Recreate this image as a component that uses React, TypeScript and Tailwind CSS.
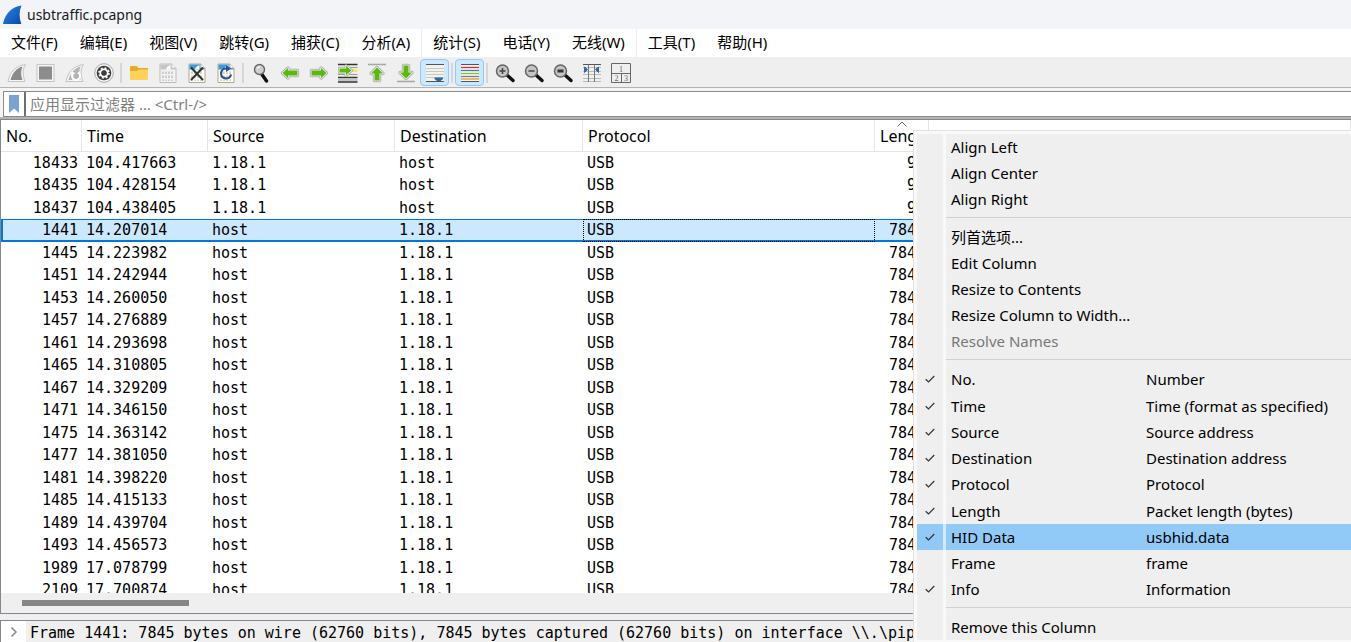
import React, { useState } from 'react';
import clsx from 'clsx';

type Packet = {
    no: number;
    time: string;
    source: string;
    destination: string;
    protocol: string;
    length: number;
};

const fromDevice = (no: number, time: string): Packet => ({
    no, time, source: '1.18.1', destination: 'host', protocol: 'USB', length: 91,
});

const fromHost = (no: number, time: string): Packet => ({
    no, time, source: 'host', destination: '1.18.1', protocol: 'USB', length: 7845,
});

const packets: Packet[] = [
    fromDevice(18433, '104.417663'),
    fromDevice(18435, '104.428154'),
    fromDevice(18437, '104.438405'),
    fromHost(1441, '14.207014'),
    fromHost(1445, '14.223982'),
    fromHost(1451, '14.242944'),
    fromHost(1453, '14.260050'),
    fromHost(1457, '14.276889'),
    fromHost(1461, '14.293698'),
    fromHost(1465, '14.310805'),
    fromHost(1467, '14.329209'),
    fromHost(1471, '14.346150'),
    fromHost(1475, '14.363142'),
    fromHost(1477, '14.381050'),
    fromHost(1481, '14.398220'),
    fromHost(1485, '14.415133'),
    fromHost(1489, '14.439704'),
    fromHost(1493, '14.456573'),
    fromHost(1989, '17.078799'),
    fromHost(2109, '17.700874'),
];

const menuGroups = [
    ['文件(F)', '编辑(E)', '视图(V)', '跳转(G)', '捕获(C)', '分析(A)'],
    ['统计(S)', '电话(Y)', '无线(W)'],
    ['工具(T)', '帮助(H)'],
];

const columns = [
    { name: 'No.', field: 'Number', shown: true },
    { name: 'Time', field: 'Time (format as specified)', shown: true },
    { name: 'Source', field: 'Source address', shown: true },
    { name: 'Destination', field: 'Destination address', shown: true },
    { name: 'Protocol', field: 'Protocol', shown: true },
    { name: 'Length', field: 'Packet length (bytes)', shown: true },
    { name: 'HID Data', field: 'usbhid.data', shown: true },
    { name: 'Frame', field: 'frame', shown: false },
    { name: 'Info', field: 'Information', shown: true },
];

function Icon({ children }: { children: React.ReactNode }) {
    return <svg viewBox="0 0 20 20" className="h-5 w-5 shrink-0" aria-hidden="true">{children}</svg>;
}

function Fin() {
    return (
        <>
            <path d="M1 18.500C3 9 8 3 18.500 1.500C15.500 6 15.500 12 18 18.500Z" fill="#f6f6f6" stroke="#c4c4c4" />
            <path d="M3.500 17C5.500 10 9 5.500 15.500 3.500C13.500 8 13.800 12.500 15.500 17Z" fill="#8a8a8a" />
        </>
    );
}

function DocPage({ muted }: { muted?: boolean }) {
    return (
        <>
            <path d="M2 1H14L18 5V19.500H2Z" fill={muted ? '#f4f4f4' : '#fffff0'} stroke={muted ? '#bdbdbd' : '#a9a99c'} />
            <path d="M2.500 1.500H13.500V5H17.500V6.500H2.500Z" fill={muted ? '#c6c6c6' : '#3a9bd8'} />
            <path d="M8 6.500C8.500 4 10 2.800 12.500 2.200V6.500Z" fill="#fff" />
            <path d="M14 1V5H18" fill="#fff" stroke={muted ? '#bdbdbd' : '#a9a99c'} strokeWidth=".7" />
            <path d="M5 8.500V11M5 12.500V15M5 16.500V18M8 8.500V11M8 12.500V15M8 16.500V18M11 8.500V11M11 12.500V15M11 16.500V18M14 8.500V11M14 12.500V15M14 16.500V18" stroke={muted ? '#bcbcbc' : '#c2c2b4'} strokeWidth="1.4" />
        </>
    );
}

function Arrow({ d }: { d: string }) {
    return (
        <>
            <path d={d} fill="#b3b3b3" stroke="#b3b3b3" strokeWidth="3.400" strokeLinejoin="round" />
            <path d={d} fill="#5cb811" stroke="#eef3e8" strokeWidth="1.400" strokeLinejoin="round" />
            <path d={d} fill="#5cb811" />
        </>
    );
}

function Magnifier({ children }: { children?: React.ReactNode }) {
    return (
        <>
            <path d="M12.500 12.500L18 17.500" stroke="#111" strokeWidth="3.400" strokeLinecap="round" />
            <circle cx="7.500" cy="8" r="6" fill="#c4c4c4" stroke="#666" strokeWidth="1.500" />
            {children}
        </>
    );
}

const toolbar: { label: string; icon: React.ReactNode; on?: boolean }[][] = [
    [
        { label: '开始捕获', icon: <Fin /> },
        {
            label: '停止捕获',
            icon: (
                <>
                    <rect x="1" y="1.500" width="17" height="17" fill="#f6f6f6" stroke="#c4c4c4" />
                    <rect x="3" y="3.500" width="13" height="13" fill="#8c8c8c" />
                </>
            ),
        },
        {
            label: '重新开始捕获',
            icon: (
                <>
                    <path d="M1 18.500C3 9 8 3 18.500 1.500C15.500 6 15.500 12 18 18.500Z" fill="#f2f2f2" stroke="#c4c4c4" />
                    <path d="M3.500 17C5.500 10 9 5.500 15.500 3.500C13.500 8 13.800 12.500 15.500 17Z" fill="#b4b4b4" />
                    <path d="M13 9.500A4 4 0 1 1 7.500 11.500" fill="none" stroke="#fff" strokeWidth="2.200" />
                    <path d="M6 12.500L6.500 8L10.500 10.500Z" fill="#fff" />
                </>
            ),
        },
        {
            label: '捕获选项',
            icon: (
                <>
                    <circle cx="10" cy="10" r="9.300" fill="#f4f4f4" stroke="#a8a8a8" />
                    <circle cx="10" cy="10" r="7.300" fill="#3d3d3d" />
                    <circle cx="10" cy="10" r="3.600" fill="none" stroke="#fff" strokeWidth="1.800" />
                    <circle cx="10" cy="10" r="5" fill="none" stroke="#fff" strokeWidth="1.600" strokeDasharray="1.960 1.960" />
                    <circle cx="10" cy="10" r="2.500" fill="#3d3d3d" />
                </>
            ),
        },
    ],
    [
        {
            label: '打开',
            icon: (
                <>
                    <path d="M1 4Q1 3 2 3H7.500L9.500 5H18Q19 5 19 6V10H1Z" fill="#e9a825" />
                    <path d="M1 8H8L10 6.500H18Q19 6.500 19 7.500V16Q19 17 18 17H2Q1 17 1 16Z" fill="#ffd25c" />
                </>
            ),
        },
        { label: '保存', icon: <DocPage muted /> },
        {
            label: '关闭',
            icon: (
                <>
                    <DocPage />
                    <path d="M4.500 5L15.500 16.500M15.500 5L4.500 16.500" stroke="#2e3436" strokeWidth="2" strokeLinecap="round" />
                </>
            ),
        },
        {
            label: '重新加载',
            icon: (
                <>
                    <DocPage />
                    <path d="M10.500 5.500A5 5 0 1 0 15 11.500" fill="none" stroke="#2a4f8f" strokeWidth="2.200" />
                    <path d="M10 2L15 5.500L10 9Z" fill="#2a4f8f" />
                </>
            ),
        },
    ],
    [
        {
            label: '查找分组',
            icon: (
                <>
                    <path d="M11 11.500L15.500 18" stroke="#111" strokeWidth="3.400" strokeLinecap="round" />
                    <circle cx="8.500" cy="6.500" r="5" fill="#cfcfcf" stroke="#666" strokeWidth="1.400" />
                    <path d="M6 5.500Q7 3.800 9 3.800" fill="none" stroke="#fff" strokeWidth="1.200" />
                </>
            ),
        },
        { label: '上一分组', icon: <Arrow d="M2.500 10L8 5V7.500H17.500V12.500H8V15Z" /> },
        { label: '下一分组', icon: <Arrow d="M17.500 10L12 5V7.500H2.500V12.500H12V15Z" /> },
        {
            label: '转到分组',
            icon: (
                <>
                    <path d="M0 1.500H19.500M0 14.500H19.500M0 19H19.500" stroke="#333" strokeWidth="1.300" />
                    <path d="M0 4.500H19.500M0 11.500H19.500M0 17H19.500" stroke="#999" />
                    <path d="M13 7.500H19.500" stroke="#fce94f" strokeWidth="3" />
                    <Arrow d="M13.500 7.500L8 3V5.500H1.500V9.500H8V12Z" />
                </>
            ),
        },
        {
            label: '第一个分组',
            icon: (
                <>
                    <path d="M1 1.500H19" stroke="#a8a8a8" strokeWidth="1.600" />
                    <Arrow d="M10 4.500L4 10.500H7.500V17.500H12.500V10.500H16Z" />
                </>
            ),
        },
        {
            label: '最后一个分组',
            icon: (
                <>
                    <path d="M1 18.500H19" stroke="#a8a8a8" strokeWidth="1.600" />
                    <Arrow d="M10 15.500L4 9.500H7.500V2.500H12.500V9.500H16Z" />
                </>
            ),
        },
        {
            label: '自动滚动',
            on: true,
            icon: (
                <>
                    <rect x="1" y="1" width="18" height="18" fill="#f1f3ee" />
                    <path d="M1 1.500H19M1 18.500H19" stroke="#555" />
                    <path d="M1 5.500H19M1 8.500H19M1 11.500H19M1 14.500H19" stroke="#c5c8bf" />
                    <path d="M9.500 14.500H18V16L15.500 18H12L9.500 16Z" fill="#3465a4" />
                </>
            ),
        },
    ],
    [
        {
            label: '着色',
            on: true,
            icon: (
                <>
                    <rect x="1" y="1" width="18" height="18" fill="#f5f7fa" />
                    <path d="M1 1.500H19M1 18.500H19" stroke="#555" />
                    <path d="M1 4.500H19" stroke="#ef2929" strokeWidth="1.300" />
                    <path d="M1 7.500H19" stroke="#4a76b4" strokeWidth="1.300" />
                    <path d="M1 10.500H19" stroke="#73d216" strokeWidth="1.300" />
                    <path d="M1 13.500H19" stroke="#8d6f98" strokeWidth="1.300" />
                    <path d="M1 16H19" stroke="#c9a818" strokeWidth="1.300" />
                </>
            ),
        },
    ],
    [
        { label: '放大', icon: <Magnifier><path d="M4.500 8H10.500M7.500 5V11" stroke="#444" strokeWidth="1.500" /></Magnifier> },
        { label: '缩小', icon: <Magnifier><path d="M4.500 8H10.500" stroke="#444" strokeWidth="1.500" /></Magnifier> },
        { label: '正常大小', icon: <Magnifier><path d="M4.500 8H10.500" stroke="#333" strokeWidth="3" /></Magnifier> },
        {
            label: '调整列宽',
            icon: (
                <>
                    <path d="M1 1.500H19" stroke="#555" />
                    <path d="M1 4.500H19M1 8.500H19M1 11.500H19M1 15.500H19M1 18.500H19" stroke="#b9bdb3" />
                    <path d="M6.500 1.500V19M12.500 1.500V19" stroke="#777" />
                    <path d="M2.500 4L5.500 6.500L2.500 9.500ZM16.500 4L13.500 6.500L16.500 9.500Z" fill="#3465a4" stroke="#3465a4" />
                </>
            ),
        },
        {
            label: '布局',
            icon: (
                <>
                    <path d="M.5 .5H19.500V19.500H.5ZM.5 10.500H19.500M10.500 10.500V19.500" fill="none" stroke="#666" />
                    <g fill="#666" fontSize="8" fontFamily="Liberation Serif, serif" textAnchor="middle">
                        <text x="10" y="8.500">1</text>
                        <text x="5.500" y="18">2</text>
                        <text x="15" y="18">3</text>
                    </g>
                </>
            ),
        },
    ],
];

function TitleBar() {
    return (
        <header className="flex h-[29px] shrink-0 items-center gap-1 bg-[#f2f4f7] px-[3px]">
            <svg viewBox="0 0 20 20" className="h-5 w-5" aria-hidden="true">
                <defs>
                    <linearGradient id="fin" x1="0" y1="0" x2="1" y2="1">
                        <stop offset="0" stopColor="#2f86e8" />
                        <stop offset="1" stopColor="#0848a8" />
                    </linearGradient>
                </defs>
                <path d="M0 19C2 8.500 8.500 2 18.500 .5C16 6.500 16 12.500 18.300 19Z" fill="url(#fin)" />
            </svg>
            <h1 className="text-sm text-[#1a1a1a]">usbtraffic.pcapng</h1>
        </header>
    );
}

function MenuBar() {
    return (
        <nav className="flex h-7 shrink-0 items-center bg-white">
            {menuGroups.map((group, i) => (
                <div key={i} className="flex h-full items-center border-l border-[#ececec] pb-[2px] first:border-l-0">
                    {group.map((label) => (
                        <button key={label} type="button" className="px-[11px] text-[15px] leading-6 whitespace-nowrap">{label}</button>
                    ))}
                </div>
            ))}
        </nav>
    );
}

function Toolbar() {
    return (
        <div className="flex h-[31px] shrink-0 items-center border-b border-[#b4b4b4] bg-[#efefef] pt-px pl-[2px]">
            {toolbar.map((group, i) => (
                <React.Fragment key={i}>
                    {i > 0 && <span className="mx-[2px] h-5 w-[2px] shrink-0 bg-[#d6d6d6]" />}
                    {group.map((item) => (
                        <button
                            key={item.label}
                            type="button"
                            aria-label={item.label}
                            className={clsx(
                                'flex h-[27px] w-[29px] shrink-0 items-center justify-center rounded-sm border',
                                item.on ? 'border-[#90c8f6] bg-[#cce8ff]' : 'border-transparent',
                            )}
                        >
                            <Icon>{item.icon}</Icon>
                        </button>
                    ))}
                </React.Fragment>
            ))}
        </div>
    );
}

function FilterBar() {
    const [filter, setFilter] = useState('');

    return (
        <div className="shrink-0 border-b-2 border-[#b4b4b4] bg-[#f5f5f5] pt-[3px] pl-[3px]">
            <div className="flex h-[26px] border border-r-0 border-[#8a8a8a] bg-white">
                <button type="button" aria-label="书签" className="flex w-[22px] items-center justify-center border-r-2 border-[#6e6e6e]">
                    <svg viewBox="0 0 12 18" className="h-[18px] w-3" aria-hidden="true">
                        <path d="M1 0H11V18L6 13.500L1 18Z" fill="#7ba2d0" />
                    </svg>
                </button>
                <input
                    type="text"
                    aria-label="显示过滤器"
                    value={filter}
                    onChange={(e) => setFilter(e.target.value)}
                    placeholder="应用显示过滤器 … <Ctrl-/>"
                    className="min-w-0 flex-1 px-1 text-[15px] outline-none placeholder:text-[#808080]"
                />
            </div>
        </div>
    );
}

function PacketList() {
    const [selected, setSelected] = useState(1441);
    const th = 'relative h-8 border-r border-b border-[#e5e5e5] pl-[5px] text-left font-normal';

    return (
        <section className="flex min-h-0 flex-1 flex-col border border-r-0 border-[#828790] bg-white">
            <div className="min-h-0 flex-1 overflow-hidden">
                <table className="w-full table-fixed border-separate border-spacing-0">
                    <colgroup>
                        <col className="w-[81px]" />
                        <col className="w-[126px]" />
                        <col className="w-[187px]" />
                        <col className="w-[188px]" />
                        <col className="w-[292px]" />
                        <col className="w-[54px]" />
                        <col />
                    </colgroup>
                    <thead className="text-base">
                        <tr>
                            <th className={th}>No.</th>
                            <th className={th}>Time</th>
                            <th className={th}>Source</th>
                            <th className={th}>Destination</th>
                            <th className={th}>Protocol</th>
                            <th className={th}>
                                <svg viewBox="0 0 10 6" className="absolute top-px left-[22px] h-[6px] w-[10px]" aria-hidden="true">
                                    <path d="M.5 5.500L5 1L9.500 5.500" fill="none" stroke="#666" />
                                </svg>
                                Length
                            </th>
                            <th className={th} />
                        </tr>
                    </thead>
                    <tbody className="font-['DejaVu_Sans_Mono',monospace] text-[15px] leading-5">
                        {packets.map((p) => {
                            const active = p.no === selected;
                            const td = clsx(
                                'px-1 pb-0 align-top',
                                active ? 'border-t border-b-2 border-[#0078d7] bg-[#cce8ff] pt-0' : 'pt-px',
                            );
                            return (
                                <tr key={p.no} onClick={() => setSelected(p.no)} className="odd:h-[22px] even:h-[23px]">
                                    <td className={clsx(td, 'text-right', active && 'border-l-2')}>{p.no}</td>
                                    <td className={td}>{p.time}</td>
                                    <td className={td}>{p.source}</td>
                                    <td className={td}>{p.destination}</td>
                                    <td className={clsx(td, active && 'outline-1 -outline-offset-1 outline-dotted outline-black')}>{p.protocol}</td>
                                    <td className={clsx(td, 'text-right')}>{p.length}</td>
                                    <td className={td} />
                                </tr>
                            );
                        })}
                    </tbody>
                </table>
            </div>
            <div className="flex h-5 shrink-0 items-center bg-[#efefef] pl-[21px]">
                <div className="h-[6px] w-[167px] bg-[#868686]" />
            </div>
        </section>
    );
}

function PacketDetails() {
    return (
        <section className="mt-[6px] flex h-[22px] shrink-0 overflow-hidden border-t border-l border-[#828790] bg-[#efefef]">
            <button type="button" aria-label="展开" className="flex w-[25px] shrink-0 items-center justify-center bg-white">
                <svg viewBox="0 0 8 12" className="h-3 w-2" aria-hidden="true">
                    <path d="M1.500 1.500L6 6L1.500 10.500" fill="none" stroke="#8a8a8a" strokeWidth="1.500" />
                </svg>
            </button>
            <p className="pl-1 font-['DejaVu_Sans_Mono',monospace] text-[15px] leading-6 whitespace-pre">
                Frame 1441: 7845 bytes on wire (62760 bits), 7845 bytes captured (62760 bits) on interface \\.\pipe
            </p>
        </section>
    );
}

function MenuItem({ label, disabled }: { label: string; disabled?: boolean }) {
    return (
        <li className="flex h-[26px]">
            <button type="button" disabled={disabled} className="flex-1 pl-[34px] text-left disabled:text-[#787878]">{label}</button>
        </li>
    );
}

function Separator() {
    return <li role="separator" className="mt-[5px] mb-[6px] ml-[29px] h-px bg-[#d0d0d0]" />;
}

function ColumnItem({ name, field, shown }: { name: string; field: string; shown: boolean }) {
    const [checked, setChecked] = useState(shown);

    return (
        <li className={clsx('flex h-[26px] nth-[4n+1]:h-[27px]', name === 'HID Data' && 'bg-[#91c9f7]')}>
            <label className="relative flex flex-1 items-center">
                <input type="checkbox" checked={checked} onChange={() => setChecked(!checked)} className="peer sr-only" />
                <svg viewBox="0 0 10 8" className="invisible mr-[16px] ml-2 h-2 w-[10px] shrink-0 peer-checked:visible" aria-hidden="true">
                    <path d="M.7 4.300L3.500 7L9.300 1" fill="none" stroke="#333" strokeWidth="1.200" />
                </svg>
                <span className="w-[195px] shrink-0">{name}</span>
                <span className="whitespace-nowrap">{field}</span>
            </label>
        </li>
    );
}

function ColumnMenu() {
    return (
        <div className="absolute top-[130px] right-0 left-[913px] overflow-hidden border-t border-l border-[#e2e2e2] bg-[#f9f9f9] pt-[3px] pb-[3px] pl-[3px]">
            <ul className="relative bg-[#efefef] text-[15px] leading-5">
                <li role="presentation" className="absolute inset-y-0 left-[26px] w-[3px] bg-white/60" />
                <MenuItem label="Align Left" />
                <MenuItem label="Align Center" />
                <MenuItem label="Align Right" />
                <Separator />
                <MenuItem label="列首选项..." />
                <MenuItem label="Edit Column" />
                <MenuItem label="Resize to Contents" />
                <MenuItem label="Resize Column to Width..." />
                <MenuItem label="Resolve Names" disabled />
                <Separator />
                {columns.map((c) => <ColumnItem key={c.name} {...c} />)}
                <Separator />
                <MenuItem label="Remove this Column" />
            </ul>
        </div>
    );
}

export default function App() {
    return (
        <main className="relative flex h-screen flex-col overflow-hidden bg-[#efefef] font-['Noto_Sans','Noto_Sans_CJK_SC',sans-serif] text-black">
            <TitleBar />
            <MenuBar />
            <Toolbar />
            <FilterBar />
            <PacketList />
            <PacketDetails />
            <ColumnMenu />
        </main>
    );
}
